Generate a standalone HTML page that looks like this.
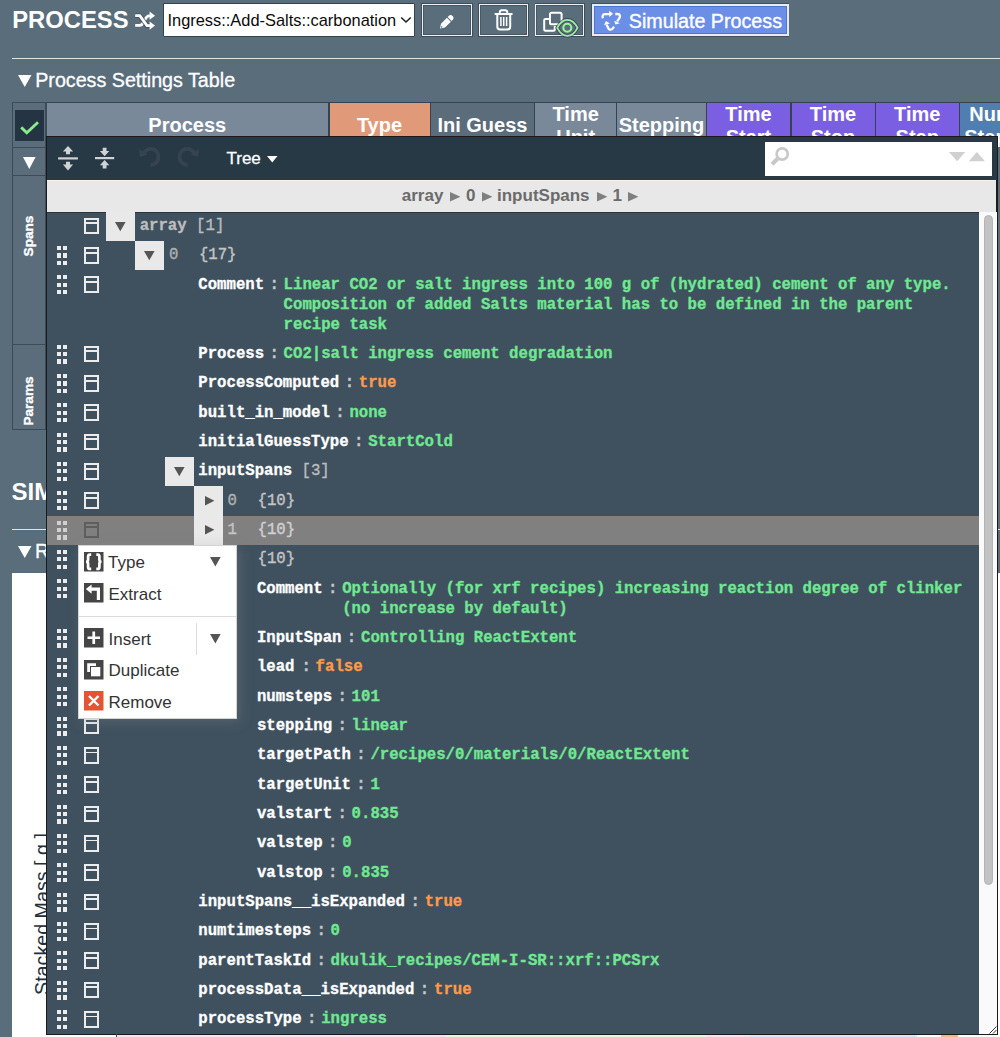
<!DOCTYPE html><html><head><meta charset='utf-8'><style>
html,body{margin:0;padding:0;}
body{width:1000px;height:1037px;position:relative;overflow:hidden;background:#5a6d7b;font-family:"Liberation Sans",sans-serif;}
.a{position:absolute;}
.t{white-space:pre;}
svg{position:absolute;overflow:visible;}
</style></head><body>
<div class='a' style='left:12.00px;top:573.00px;width:988.00px;height:464.00px;background:#ffffff;'></div>
<div class='a t' style='left:12.20px;top:8.35px;font-family:"Liberation Sans", sans-serif;font-size:23.8px;line-height:23.8px;font-weight:700;color:#fff;'>PROCESS</div>
<svg style='left:0;top:0' width='200' height='40'>
<g fill='none' stroke-linecap='butt'>
<path d='M135.2 25.4 H139.6 C141.6 25.4 142.4 24.3 143.3 22.6 L145 19.6 C146 17.6 147 15.8 149 15.8 H151' stroke='#fff' stroke-width='2.8'/>
<path d='M135.2 15.7 H139.8 L147 25.6 H151' stroke='#3c4c58' stroke-width='4.6' stroke-opacity='0.8'/>
<path d='M135.2 15.7 H139.8 L147 25.6 H151' stroke='#fff' stroke-width='2.8'/>
</g>
<path d='M149.6 11.6 L155 15.7 L149.6 19.8 Z' fill='#fff'/>
<path d='M149.6 21.5 L155 25.6 L149.6 29.7 Z' fill='#fff'/>
</svg>
<div class='a' style='left:162.60px;top:3.20px;width:252.80px;height:33.40px;background:#fff;border-radius:1px;box-sizing:border-box;border:1px solid #33424d;'></div>
<div class='a t' style='left:167.50px;top:11.62px;font-family:"Liberation Sans", sans-serif;font-size:16.4px;line-height:16.4px;font-weight:400;color:#0a0a0a;'>Ingress::Add-Salts::carbonation</div>
<svg style='left:400px;top:16px' width='12' height='8' viewBox='0 0 12 8'><path d='M1.2 1.5 L6 6 L10.8 1.5' fill='none' stroke='#222' stroke-width='1.6'/></svg>
<div class='a' style='left:421.40px;top:3.10px;width:51.50px;height:33.50px;box-sizing:border-box;border:0.8px solid rgba(40,55,66,0.55);'></div>
<div class='a' style='left:422.00px;top:3.80px;width:50.30px;height:32.10px;box-sizing:border-box;border:1.7px solid #f0f0f0;box-shadow:inset 0 0 0 1px rgba(38,52,63,0.35);'></div>
<div class='a' style='left:478.20px;top:3.10px;width:50.40px;height:33.50px;box-sizing:border-box;border:0.8px solid rgba(40,55,66,0.55);'></div>
<div class='a' style='left:478.80px;top:3.80px;width:49.20px;height:32.10px;box-sizing:border-box;border:1.7px solid #f0f0f0;box-shadow:inset 0 0 0 1px rgba(38,52,63,0.35);'></div>
<div class='a' style='left:534.70px;top:3.10px;width:50.20px;height:33.50px;box-sizing:border-box;border:0.8px solid rgba(40,55,66,0.55);'></div>
<div class='a' style='left:535.30px;top:3.80px;width:49.00px;height:32.10px;box-sizing:border-box;border:1.7px solid #f0f0f0;box-shadow:inset 0 0 0 1px rgba(38,52,63,0.35);'></div>
<svg style='left:0;top:0' width='600' height='40'>
<g transform='translate(440,28.6) rotate(-45)' fill='#fff'>
<path d='M0 0 L4.2 -2.8 H12.6 V2.8 H4.2 Z'/>
<path d='M13.6 -2.8 H15 A2.8 2.8 0 0 1 15 2.8 H13.6 Z'/>
<circle cx='2.3' cy='0' r='0.8' fill='#5a6d7b'/>
</g>
</svg>
<svg style='left:0;top:0' width='600' height='40'>
<g fill='none' stroke='#fff'>
<path d='M495.5 14 H511.7' stroke-width='2.2' stroke-linecap='round'/>
<path d='M499.8 13.5 V12.3 C499.8 11 500.6 10.2 501.8 10.2 H505.3 C506.5 10.2 507.3 11 507.3 12.3 V13.5' stroke-width='1.9'/>
<path d='M497.3 15 V26.8 C497.3 28.6 498.5 29.6 500.2 29.6 H507.2 C508.9 29.6 510.2 28.6 510.2 26.8 V15' stroke-width='2'/>
<path d='M500.9 17 V26 M503.7 17 V26 M506.6 17 V26' stroke-width='1.5'/>
</g></svg>
<svg style='left:0;top:0' width='600' height='40'>
<g fill='none' stroke='#fff' stroke-width='2'>
<rect x='550' y='12.7' width='11.6' height='11.6' rx='1.6'/>
<path d='M549 19 H545.5 C544.7 19 544.2 19.5 544.2 20.3 V29.6 C544.2 30.4 544.7 30.8 545.5 30.8 H553.5 C554.3 30.8 554.8 30.4 554.8 29.6 V26'/>
</g>
<path d='M557.2 27.8 C560.5 21.5 564 19.8 567.4 19.8 C570.8 19.8 574.3 21.5 577.6 27.8 C574.3 34 570.8 35.8 567.4 35.8 C564 35.8 560.5 34 557.2 27.8 Z' fill='#5a6d7b' stroke='rgba(50,40,90,0.6)' stroke-width='3.6'/>
<path d='M557.2 27.8 C560.5 21.5 564 19.8 567.4 19.8 C570.8 19.8 574.3 21.5 577.6 27.8 C574.3 34 570.8 35.8 567.4 35.8 C564 35.8 560.5 34 557.2 27.8 Z' fill='none' stroke='#9af29a' stroke-width='1.8'/>
<circle cx='567.3' cy='27.7' r='4' fill='none' stroke='#9af29a' stroke-width='2.1'/>
</svg>
<div class='a' style='left:591.30px;top:3.10px;width:198.10px;height:33.50px;box-sizing:border-box;border:0.8px solid rgba(40,55,66,0.5);'></div>
<div class='a' style='left:591.90px;top:3.70px;width:196.90px;height:32.30px;background:#6b8fe7;box-sizing:border-box;border:2px solid #e8ebf2;box-shadow:inset 0 0 0 1px rgba(60,100,200,0.6);'></div>
<svg style='left:0;top:0' width='700' height='40'>
<g fill='none' stroke='#fff' stroke-width='2.3' stroke-linejoin='round'>
<path d='M603 18.3 C602 16.5 602.6 14.2 604.8 14.2 H609.5'/>
<path d='M615.3 14 H617.8 C619.8 14 620.6 16 619.5 17.8 L617.2 21.5'/>
<path d='M614 26.6 L612.6 28.6 C611.5 30 609.5 30 608.5 28.6 L606.6 24.8'/>
</g>
<path d='M609.2 10.8 L613 13.8 L609.2 16.9 Z' fill='#fff'/>
<path d='M614.3 20.8 L619.9 23.3 L615.3 24.6 Z' fill='#fff'/>
<path d='M604 25.2 L605.9 20.9 L609.9 23.5 Z' fill='#fff'/>
</svg>
<div class='a t' style='left:628.80px;top:12.02px;font-family:"Liberation Sans", sans-serif;font-size:19.7px;line-height:19.7px;font-weight:400;color:#fff;-webkit-text-stroke:0.35px #fff;'>Simulate Process</div>
<div class='a' style='left:12.00px;top:57.80px;width:988.00px;height:1.40px;background:#e6e3df;'></div>
<svg style='left:18px;top:74.5px' width='14' height='12' viewBox='0 0 14 12'><path d='M0 0 H13.5 L6.75 12 Z' fill='#fff'/></svg>
<div class='a t' style='left:35.20px;top:70.92px;font-family:"Liberation Sans", sans-serif;font-size:19.7px;line-height:19.7px;font-weight:400;color:#fff;-webkit-text-stroke:0.3px #fff;'>Process Settings Table</div>
<div class='a' style='left:12.00px;top:102.20px;width:988.00px;height:45.00px;background:#34434f;'></div>
<div class='a' style='left:12.00px;top:102.20px;width:34.50px;height:328.30px;background:#3c4b57;'></div>
<div class='a' style='left:12.80px;top:103.00px;width:32.70px;height:43.60px;background:#5b6d7b;'></div>
<div class='a' style='left:15.00px;top:110.00px;width:29.00px;height:31.00px;background:#243442;'></div>
<svg style='left:20px;top:118px' width='19' height='15' viewBox='0 0 19 15'><path d='M1.2 9.4 L6.8 14.8 L18 4.2' fill='none' stroke='#8ae98a' stroke-width='2.9'/></svg>
<div class='a' style='left:12.80px;top:147.80px;width:32.70px;height:26.80px;background:#5b6d7b;'></div>
<svg style='left:23px;top:157px' width='13' height='12' viewBox='0 0 13 12'><path d='M0 0 H12.6 L6.3 12 Z' fill='#fff'/></svg>
<div class='a' style='left:12.80px;top:175.80px;width:32.70px;height:167.80px;background:#5b6d7b;'></div>
<div class='a' style='left:12.80px;top:344.80px;width:32.70px;height:84.70px;background:#5b6d7b;'></div>
<div class='a t' style='left:29px;top:236px;transform:translate(-50%,-50%) rotate(-90deg);font-family:"Liberation Sans", sans-serif;font-size:13.6px;line-height:14px;font-weight:700;color:#fff;-webkit-text-stroke:0.35px #fff'>Spans</div>
<div class='a t' style='left:29px;top:400.5px;transform:translate(-50%,-50%) rotate(-90deg);font-family:"Liberation Sans", sans-serif;font-size:13.6px;line-height:14px;font-weight:700;color:#fff;-webkit-text-stroke:0.35px #fff'>Params</div>
<div class='a' style='left:46.50px;top:102.80px;width:281.50px;height:43.80px;background:#7a899a;'></div>
<div class='a t' style='left:46.5px;width:281.5px;text-align:center;top:115.06px;font-family:"Liberation Sans", sans-serif;font-size:20px;line-height:20px;font-weight:700;color:#fff'>Process</div>
<div class='a' style='left:329.50px;top:102.80px;width:100.00px;height:43.80px;background:#e19a79;'></div>
<div class='a t' style='left:329.5px;width:100.0px;text-align:center;top:115.06px;font-family:"Liberation Sans", sans-serif;font-size:20px;line-height:20px;font-weight:700;color:#fff'>Type</div>
<div class='a' style='left:431.00px;top:102.80px;width:102.90px;height:43.80px;background:#5b6c7a;'></div>
<div class='a t' style='left:431px;width:102.89999999999998px;text-align:center;top:115.06px;font-family:"Liberation Sans", sans-serif;font-size:20px;line-height:20px;font-weight:700;color:#fff'>Ini Guess</div>
<div class='a' style='left:535.30px;top:102.80px;width:80.70px;height:43.80px;background:#7a899a;'></div>
<div class='a' style='left:535.3px;width:80.70000000000005px;height:43.8px;top:102.8px;overflow:hidden'><div class='a t' style='left:0;width:80.70000000000005px;text-align:center;top:0.46px;font-family:"Liberation Sans", sans-serif;font-size:20px;line-height:22.6px;font-weight:700;color:#fff'>Time<br>Unit</div></div>
<div class='a' style='left:617.30px;top:102.80px;width:88.30px;height:43.80px;background:#7a899a;'></div>
<div class='a t' style='left:617.3px;width:88.30000000000007px;text-align:center;top:115.06px;font-family:"Liberation Sans", sans-serif;font-size:20px;line-height:20px;font-weight:700;color:#fff'>Stepping</div>
<div class='a' style='left:707.00px;top:102.80px;width:83.00px;height:43.80px;background:#7a5fe3;'></div>
<div class='a' style='left:707px;width:83px;height:43.8px;top:102.8px;overflow:hidden'><div class='a t' style='left:0;width:83px;text-align:center;top:0.46px;font-family:"Liberation Sans", sans-serif;font-size:20px;line-height:22.6px;font-weight:700;color:#fff'>Time<br>Start</div></div>
<div class='a' style='left:791.50px;top:102.80px;width:83.00px;height:43.80px;background:#7a5fe3;'></div>
<div class='a' style='left:791.5px;width:83.0px;height:43.8px;top:102.8px;overflow:hidden'><div class='a t' style='left:0;width:83.0px;text-align:center;top:0.46px;font-family:"Liberation Sans", sans-serif;font-size:20px;line-height:22.6px;font-weight:700;color:#fff'>Time<br>Stop</div></div>
<div class='a' style='left:876.00px;top:102.80px;width:82.50px;height:43.80px;background:#7a5fe3;'></div>
<div class='a' style='left:876px;width:82.5px;height:43.8px;top:102.8px;overflow:hidden'><div class='a t' style='left:0;width:82.5px;text-align:center;top:0.46px;font-family:"Liberation Sans", sans-serif;font-size:20px;line-height:22.6px;font-weight:700;color:#fff'>Time<br>Step</div></div>
<div class='a' style='left:960.00px;top:102.80px;width:63.00px;height:43.80px;background:#517eb0;'></div>
<div class='a' style='left:960px;width:63px;height:43.8px;top:102.8px;overflow:hidden'><div class='a t' style='left:0;width:63px;text-align:center;top:0.46px;font-family:"Liberation Sans", sans-serif;font-size:20px;line-height:22.6px;font-weight:700;color:#fff'>Num<br>Steps</div></div>
<div class='a t' style='left:11.50px;top:480.28px;font-family:"Liberation Sans", sans-serif;font-size:24px;line-height:24px;font-weight:700;color:#fff;'>SIMULATION</div>
<div class='a' style='left:12.00px;top:528.80px;width:988.00px;height:1.40px;background:#e6e3df;'></div>
<svg style='left:18px;top:546px' width='14' height='12' viewBox='0 0 14 12'><path d='M0 0 H13.5 L6.75 12 Z' fill='#fff'/></svg>
<div class='a t' style='left:35.00px;top:541.74px;font-family:"Liberation Sans", sans-serif;font-size:19.8px;line-height:19.8px;font-weight:400;color:#fff;-webkit-text-stroke:0.3px #fff;'>Results</div>
<div class='a t' style='left:34px;top:914px;transform:translate(0,-50%) rotate(-90deg);transform-origin:0 50%;font-family:"Liberation Sans", sans-serif;font-size:19.7px;line-height:20px;color:#253746'></div>
<div class='a t' style='left:42px;top:915px;width:0;height:0'><div class='a t' style='left:-80px;top:-10px;width:160px;text-align:center;transform:rotate(-90deg);font-family:"Liberation Sans", sans-serif;font-size:19.7px;line-height:20px;color:#1f2f3c'>Stacked Mass [ g ]</div></div>
<div class='a' style='left:46.00px;top:136.20px;width:952.00px;height:898.80px;background:#1b1b1b;'></div>
<div class='a' style='left:47.00px;top:137.20px;width:950.00px;height:42.60px;background:#263945;'></div>
<svg style='left:58px;top:146px' width='21' height='25' viewBox='0 0 21 25'>
<path d='M10 0 L15.1 5.6 H12 V8.3 H8 V5.6 H4.9 Z' fill='#d0d3d6'/>
<rect x='0.1' y='11.3' width='19.8' height='2.2' fill='#d0d3d6'/>
<path d='M10 24.5 L15.1 18.6 H12 V15.8 H8 V18.6 H4.9 Z' fill='#d0d3d6'/>
</svg>
<svg style='left:95px;top:147px' width='21' height='22' viewBox='0 0 21 22'>
<path d='M9.6 9.2 L14.3 4 H11.5 V0.8 H7.7 V4 H4.9 Z' fill='#d0d3d6'/>
<rect x='0' y='10' width='19.2' height='2.2' fill='#d0d3d6'/>
<path d='M9.6 13 L14.3 18.2 H11.5 V21.5 H7.7 V18.2 H4.9 Z' fill='#d0d3d6'/>
</svg>
<svg style='left:138px;top:146px' width='24' height='22' viewBox='0 0 24 22'>
<path d='M6 7 C8 3.5 11 2.5 14 3 C18 3.5 20.5 7 20.5 11 C20.5 15.5 17 19 12.5 19' fill='none' stroke='#354450' stroke-width='3.8'/>
<path d='M1 3 L2 11 L9.5 8.5 Z' fill='#354450'/>
</svg>
<svg style='left:176px;top:146px' width='24' height='22' viewBox='0 0 24 22'>
<path d='M18 7 C16 3.5 13 2.5 10 3 C6 3.5 3.5 7 3.5 11 C3.5 15.5 7 19 11.5 19' fill='none' stroke='#354450' stroke-width='3.8'/>
<path d='M23 3 L22 11 L14.5 8.5 Z' fill='#354450'/>
</svg>
<div class='a t' style='left:226.50px;top:149.51px;font-family:"Liberation Sans", sans-serif;font-size:17px;line-height:17px;font-weight:400;color:#fff;-webkit-text-stroke:0.3px #fff;'>Tree</div>
<svg style='left:267px;top:156px' width='11' height='7' viewBox='0 0 11 7'><path d='M0 0 H10.5 L5.25 6.5 Z' fill='#fff'/></svg>
<div class='a' style='left:764.70px;top:141.70px;width:227.50px;height:34.60px;background:#fff;'></div>
<svg style='left:770px;top:147px' width='20' height='19' viewBox='0 0 20 19'>
<circle cx='12.2' cy='7' r='5.6' fill='none' stroke='#c8c8c8' stroke-width='2.6'/>
<path d='M8.3 11 L2 17.2' stroke='#c8c8c8' stroke-width='4'/>
</svg>
<svg style='left:948.5px;top:152px' width='37' height='10' viewBox='0 0 37 10'>
<path d='M0 0 H16.2 L8.1 9.3 Z' fill='#d0d0d0'/><path d='M19.8 9.3 H36 L27.9 0 Z' fill='#d0d0d0'/></svg>
<div class='a' style='left:47.00px;top:179.80px;width:949.00px;height:31.80px;background:#e8e8e8;'></div>
<div class='a' style='left:47.00px;top:179.80px;width:949.00px;height:1.00px;background:#f2f2f2;'></div>
<div class='a t' style='left:401.80px;top:187.01px;font-family:"Liberation Sans", sans-serif;font-size:17px;line-height:17px;font-weight:700;color:#6b6b6b;'>array</div>
<div class='a t' style='left:466.00px;top:187.01px;font-family:"Liberation Sans", sans-serif;font-size:17px;line-height:17px;font-weight:700;color:#6b6b6b;'>0</div>
<div class='a t' style='left:497.00px;top:187.01px;font-family:"Liberation Sans", sans-serif;font-size:17px;line-height:17px;font-weight:700;color:#6b6b6b;'>inputSpans</div>
<div class='a t' style='left:612.50px;top:187.01px;font-family:"Liberation Sans", sans-serif;font-size:17px;line-height:17px;font-weight:700;color:#6b6b6b;'>1</div>
<svg style='left:450.3px;top:191.5px' width='11' height='10' viewBox='0 0 11 10'><path d='M0 0 V9.4 L10.4 4.7 Z' fill='#7f7f7f'/></svg>
<svg style='left:482.3px;top:191.5px' width='11' height='10' viewBox='0 0 11 10'><path d='M0 0 V9.4 L10.4 4.7 Z' fill='#7f7f7f'/></svg>
<svg style='left:596.7px;top:191.5px' width='11' height='10' viewBox='0 0 11 10'><path d='M0 0 V9.4 L10.4 4.7 Z' fill='#7f7f7f'/></svg>
<svg style='left:628.2px;top:191.5px' width='11' height='10' viewBox='0 0 11 10'><path d='M0 0 V9.4 L10.4 4.7 Z' fill='#7f7f7f'/></svg>
<div class='a' style='left:47.00px;top:211.60px;width:932.00px;height:822.60px;background:#3f515f;'></div>
<div class='a' style='left:47.00px;top:211.60px;width:932.00px;height:1.00px;background:#26343f;'></div>
<div class='a' style='left:979.00px;top:211.60px;width:18.00px;height:822.60px;background:#fafafa;'></div>
<div class='a' style='left:984.00px;top:215.40px;width:9.00px;height:669.30px;background:#c2c2c2;border-radius:4.5px;box-sizing:border-box;border:0.6px solid #b4b4b4;'></div>
<div class='a' style='left:84.00px;top:217.70px;width:14.50px;height:16.80px;box-sizing:border-box;border:2.3px solid #ececec;'></div>
<div class='a' style='left:86.00px;top:222.40px;width:10.50px;height:1.80px;background:#ececec;'></div>
<div class='a' style='left:106.00px;top:211.40px;width:29.20px;height:29.33px;background:#e9e9e9;'></div>
<svg style='left:114.90px;top:222.00px' width='11' height='10' viewBox='0 0 11 10'><path d='M0 0 H10.6 L5.3 9.3 Z' fill='#555'/></svg>
<div class='a t' style='left:139.70px;top:219.10px;font-family:"Liberation Mono", monospace;font-size:15.67px;line-height:15.67px;font-weight:700;color:#bdbdbd;transform:scaleY(1.08);transform-origin:0 12.00px;-webkit-text-stroke:0.3px #bdbdbd;'>array</div>
<div class='a t' style='left:196.11px;top:219.10px;font-family:"Liberation Mono", monospace;font-size:15.67px;line-height:15.67px;font-weight:400;color:#bdbdbd;transform:scaleY(1.08);transform-origin:0 12.00px;-webkit-text-stroke:0.35px #bdbdbd;'>[1]</div>
<div class='a' style='left:56.70px;top:245.93px;width:4.20px;height:4.20px;background:#ececec;'></div>
<div class='a' style='left:56.70px;top:253.33px;width:4.20px;height:4.20px;background:#ececec;'></div>
<div class='a' style='left:56.70px;top:260.73px;width:4.20px;height:4.20px;background:#ececec;'></div>
<div class='a' style='left:62.70px;top:245.93px;width:4.20px;height:4.20px;background:#ececec;'></div>
<div class='a' style='left:62.70px;top:253.33px;width:4.20px;height:4.20px;background:#ececec;'></div>
<div class='a' style='left:62.70px;top:260.73px;width:4.20px;height:4.20px;background:#ececec;'></div>
<div class='a' style='left:84.00px;top:247.03px;width:14.50px;height:16.80px;box-sizing:border-box;border:2.3px solid #ececec;'></div>
<div class='a' style='left:86.00px;top:251.73px;width:10.50px;height:1.80px;background:#ececec;'></div>
<div class='a' style='left:135.30px;top:240.73px;width:29.20px;height:29.33px;background:#e9e9e9;'></div>
<svg style='left:144.20px;top:251.33px' width='11' height='10' viewBox='0 0 11 10'><path d='M0 0 H10.6 L5.3 9.3 Z' fill='#555'/></svg>
<div class='a t' style='left:169.00px;top:248.43px;font-family:"Liberation Mono", monospace;font-size:15.67px;line-height:15.67px;font-weight:400;color:#b0b0b0;transform:scaleY(1.08);transform-origin:0 12.00px;-webkit-text-stroke:0.35px #b0b0b0;'>0</div>
<div class='a t' style='left:198.90px;top:248.43px;font-family:"Liberation Mono", monospace;font-size:15.67px;line-height:15.67px;font-weight:400;color:#c4c4c4;transform:scaleY(1.08);transform-origin:0 12.00px;-webkit-text-stroke:0.35px #c4c4c4;'>{17}</div>
<div class='a' style='left:56.70px;top:275.26px;width:4.20px;height:4.20px;background:#ececec;'></div>
<div class='a' style='left:56.70px;top:282.66px;width:4.20px;height:4.20px;background:#ececec;'></div>
<div class='a' style='left:56.70px;top:290.06px;width:4.20px;height:4.20px;background:#ececec;'></div>
<div class='a' style='left:62.70px;top:275.26px;width:4.20px;height:4.20px;background:#ececec;'></div>
<div class='a' style='left:62.70px;top:282.66px;width:4.20px;height:4.20px;background:#ececec;'></div>
<div class='a' style='left:62.70px;top:290.06px;width:4.20px;height:4.20px;background:#ececec;'></div>
<div class='a' style='left:84.00px;top:276.36px;width:14.50px;height:16.80px;box-sizing:border-box;border:2.3px solid #ececec;'></div>
<div class='a' style='left:86.00px;top:281.06px;width:10.50px;height:1.80px;background:#ececec;'></div>
<div class='a t' style='left:269.41px;top:277.76px;font-family:"Liberation Mono", monospace;font-size:15.67px;line-height:15.67px;font-weight:700;color:#c8c8c8;transform:scaleY(1.08);transform-origin:0 12.00px;-webkit-text-stroke:0.3px #c8c8c8;'>:</div>
<div class='a t' style='left:198.30px;top:277.76px;font-family:"Liberation Mono", monospace;font-size:15.67px;line-height:15.67px;font-weight:700;color:#ffffff;transform:scaleY(1.08);transform-origin:0 12.00px;-webkit-text-stroke:0.3px #ffffff;'>Comment</div>
<div class='a t' style='left:283.61px;top:277.76px;font-family:"Liberation Mono", monospace;font-size:15.67px;line-height:15.67px;font-weight:700;color:#70e891;transform:scaleY(1.08);transform-origin:0 12.00px;-webkit-text-stroke:0.3px #70e891;'>Linear CO2 or salt ingress into 100 g of (hydrated) cement of any type.</div>
<div class='a t' style='left:283.61px;top:297.76px;font-family:"Liberation Mono", monospace;font-size:15.67px;line-height:15.67px;font-weight:700;color:#70e891;transform:scaleY(1.08);transform-origin:0 12.00px;-webkit-text-stroke:0.3px #70e891;'>Composition of added Salts material has to be defined in the parent</div>
<div class='a t' style='left:283.61px;top:317.76px;font-family:"Liberation Mono", monospace;font-size:15.67px;line-height:15.67px;font-weight:700;color:#70e891;transform:scaleY(1.08);transform-origin:0 12.00px;-webkit-text-stroke:0.3px #70e891;'>recipe task</div>
<div class='a' style='left:56.70px;top:344.59px;width:4.20px;height:4.20px;background:#ececec;'></div>
<div class='a' style='left:56.70px;top:351.99px;width:4.20px;height:4.20px;background:#ececec;'></div>
<div class='a' style='left:56.70px;top:359.39px;width:4.20px;height:4.20px;background:#ececec;'></div>
<div class='a' style='left:62.70px;top:344.59px;width:4.20px;height:4.20px;background:#ececec;'></div>
<div class='a' style='left:62.70px;top:351.99px;width:4.20px;height:4.20px;background:#ececec;'></div>
<div class='a' style='left:62.70px;top:359.39px;width:4.20px;height:4.20px;background:#ececec;'></div>
<div class='a' style='left:84.00px;top:345.69px;width:14.50px;height:16.80px;box-sizing:border-box;border:2.3px solid #ececec;'></div>
<div class='a' style='left:86.00px;top:350.39px;width:10.50px;height:1.80px;background:#ececec;'></div>
<div class='a t' style='left:269.41px;top:347.09px;font-family:"Liberation Mono", monospace;font-size:15.67px;line-height:15.67px;font-weight:700;color:#c8c8c8;transform:scaleY(1.08);transform-origin:0 12.00px;-webkit-text-stroke:0.3px #c8c8c8;'>:</div>
<div class='a t' style='left:198.30px;top:347.09px;font-family:"Liberation Mono", monospace;font-size:15.67px;line-height:15.67px;font-weight:700;color:#ffffff;transform:scaleY(1.08);transform-origin:0 12.00px;-webkit-text-stroke:0.3px #ffffff;'>Process</div>
<div class='a t' style='left:283.61px;top:347.09px;font-family:"Liberation Mono", monospace;font-size:15.67px;line-height:15.67px;font-weight:700;color:#70e891;transform:scaleY(1.08);transform-origin:0 12.00px;-webkit-text-stroke:0.3px #70e891;'>CO2|salt ingress cement degradation</div>
<div class='a' style='left:56.70px;top:373.92px;width:4.20px;height:4.20px;background:#ececec;'></div>
<div class='a' style='left:56.70px;top:381.32px;width:4.20px;height:4.20px;background:#ececec;'></div>
<div class='a' style='left:56.70px;top:388.72px;width:4.20px;height:4.20px;background:#ececec;'></div>
<div class='a' style='left:62.70px;top:373.92px;width:4.20px;height:4.20px;background:#ececec;'></div>
<div class='a' style='left:62.70px;top:381.32px;width:4.20px;height:4.20px;background:#ececec;'></div>
<div class='a' style='left:62.70px;top:388.72px;width:4.20px;height:4.20px;background:#ececec;'></div>
<div class='a' style='left:84.00px;top:375.02px;width:14.50px;height:16.80px;box-sizing:border-box;border:2.3px solid #ececec;'></div>
<div class='a' style='left:86.00px;top:379.72px;width:10.50px;height:1.80px;background:#ececec;'></div>
<div class='a t' style='left:344.63px;top:376.42px;font-family:"Liberation Mono", monospace;font-size:15.67px;line-height:15.67px;font-weight:700;color:#c8c8c8;transform:scaleY(1.08);transform-origin:0 12.00px;-webkit-text-stroke:0.3px #c8c8c8;'>:</div>
<div class='a t' style='left:198.30px;top:376.42px;font-family:"Liberation Mono", monospace;font-size:15.67px;line-height:15.67px;font-weight:700;color:#ffffff;transform:scaleY(1.08);transform-origin:0 12.00px;-webkit-text-stroke:0.3px #ffffff;'>ProcessComputed</div>
<div class='a t' style='left:358.83px;top:376.42px;font-family:"Liberation Mono", monospace;font-size:15.67px;line-height:15.67px;font-weight:700;color:#ff9a48;transform:scaleY(1.08);transform-origin:0 12.00px;-webkit-text-stroke:0.3px #ff9a48;'>true</div>
<div class='a' style='left:56.70px;top:403.25px;width:4.20px;height:4.20px;background:#ececec;'></div>
<div class='a' style='left:56.70px;top:410.65px;width:4.20px;height:4.20px;background:#ececec;'></div>
<div class='a' style='left:56.70px;top:418.05px;width:4.20px;height:4.20px;background:#ececec;'></div>
<div class='a' style='left:62.70px;top:403.25px;width:4.20px;height:4.20px;background:#ececec;'></div>
<div class='a' style='left:62.70px;top:410.65px;width:4.20px;height:4.20px;background:#ececec;'></div>
<div class='a' style='left:62.70px;top:418.05px;width:4.20px;height:4.20px;background:#ececec;'></div>
<div class='a' style='left:84.00px;top:404.35px;width:14.50px;height:16.80px;box-sizing:border-box;border:2.3px solid #ececec;'></div>
<div class='a' style='left:86.00px;top:409.05px;width:10.50px;height:1.80px;background:#ececec;'></div>
<div class='a t' style='left:335.23px;top:405.75px;font-family:"Liberation Mono", monospace;font-size:15.67px;line-height:15.67px;font-weight:700;color:#c8c8c8;transform:scaleY(1.08);transform-origin:0 12.00px;-webkit-text-stroke:0.3px #c8c8c8;'>:</div>
<div class='a t' style='left:198.30px;top:405.75px;font-family:"Liberation Mono", monospace;font-size:15.67px;line-height:15.67px;font-weight:700;color:#ffffff;transform:scaleY(1.08);transform-origin:0 12.00px;-webkit-text-stroke:0.3px #ffffff;'>built_in_model</div>
<div class='a t' style='left:349.43px;top:405.75px;font-family:"Liberation Mono", monospace;font-size:15.67px;line-height:15.67px;font-weight:700;color:#70e891;transform:scaleY(1.08);transform-origin:0 12.00px;-webkit-text-stroke:0.3px #70e891;'>none</div>
<div class='a' style='left:56.70px;top:432.58px;width:4.20px;height:4.20px;background:#ececec;'></div>
<div class='a' style='left:56.70px;top:439.98px;width:4.20px;height:4.20px;background:#ececec;'></div>
<div class='a' style='left:56.70px;top:447.38px;width:4.20px;height:4.20px;background:#ececec;'></div>
<div class='a' style='left:62.70px;top:432.58px;width:4.20px;height:4.20px;background:#ececec;'></div>
<div class='a' style='left:62.70px;top:439.98px;width:4.20px;height:4.20px;background:#ececec;'></div>
<div class='a' style='left:62.70px;top:447.38px;width:4.20px;height:4.20px;background:#ececec;'></div>
<div class='a' style='left:84.00px;top:433.68px;width:14.50px;height:16.80px;box-sizing:border-box;border:2.3px solid #ececec;'></div>
<div class='a' style='left:86.00px;top:438.38px;width:10.50px;height:1.80px;background:#ececec;'></div>
<div class='a t' style='left:354.03px;top:435.08px;font-family:"Liberation Mono", monospace;font-size:15.67px;line-height:15.67px;font-weight:700;color:#c8c8c8;transform:scaleY(1.08);transform-origin:0 12.00px;-webkit-text-stroke:0.3px #c8c8c8;'>:</div>
<div class='a t' style='left:198.30px;top:435.08px;font-family:"Liberation Mono", monospace;font-size:15.67px;line-height:15.67px;font-weight:700;color:#ffffff;transform:scaleY(1.08);transform-origin:0 12.00px;-webkit-text-stroke:0.3px #ffffff;'>initialGuessType</div>
<div class='a t' style='left:368.23px;top:435.08px;font-family:"Liberation Mono", monospace;font-size:15.67px;line-height:15.67px;font-weight:700;color:#70e891;transform:scaleY(1.08);transform-origin:0 12.00px;-webkit-text-stroke:0.3px #70e891;'>StartCold</div>
<div class='a' style='left:56.70px;top:461.91px;width:4.20px;height:4.20px;background:#ececec;'></div>
<div class='a' style='left:56.70px;top:469.31px;width:4.20px;height:4.20px;background:#ececec;'></div>
<div class='a' style='left:56.70px;top:476.71px;width:4.20px;height:4.20px;background:#ececec;'></div>
<div class='a' style='left:62.70px;top:461.91px;width:4.20px;height:4.20px;background:#ececec;'></div>
<div class='a' style='left:62.70px;top:469.31px;width:4.20px;height:4.20px;background:#ececec;'></div>
<div class='a' style='left:62.70px;top:476.71px;width:4.20px;height:4.20px;background:#ececec;'></div>
<div class='a' style='left:84.00px;top:463.01px;width:14.50px;height:16.80px;box-sizing:border-box;border:2.3px solid #ececec;'></div>
<div class='a' style='left:86.00px;top:467.71px;width:10.50px;height:1.80px;background:#ececec;'></div>
<div class='a' style='left:164.60px;top:456.71px;width:29.20px;height:29.33px;background:#e9e9e9;'></div>
<svg style='left:173.50px;top:467.31px' width='11' height='10' viewBox='0 0 11 10'><path d='M0 0 H10.6 L5.3 9.3 Z' fill='#555'/></svg>
<div class='a t' style='left:198.30px;top:464.41px;font-family:"Liberation Mono", monospace;font-size:15.67px;line-height:15.67px;font-weight:700;color:#ffffff;transform:scaleY(1.08);transform-origin:0 12.00px;-webkit-text-stroke:0.3px #ffffff;'>inputSpans</div>
<div class='a t' style='left:301.52px;top:464.41px;font-family:"Liberation Mono", monospace;font-size:15.67px;line-height:15.67px;font-weight:400;color:#bdbdbd;transform:scaleY(1.08);transform-origin:0 12.00px;-webkit-text-stroke:0.35px #bdbdbd;'>[3]</div>
<div class='a' style='left:56.70px;top:491.24px;width:4.20px;height:4.20px;background:#ececec;'></div>
<div class='a' style='left:56.70px;top:498.64px;width:4.20px;height:4.20px;background:#ececec;'></div>
<div class='a' style='left:56.70px;top:506.04px;width:4.20px;height:4.20px;background:#ececec;'></div>
<div class='a' style='left:62.70px;top:491.24px;width:4.20px;height:4.20px;background:#ececec;'></div>
<div class='a' style='left:62.70px;top:498.64px;width:4.20px;height:4.20px;background:#ececec;'></div>
<div class='a' style='left:62.70px;top:506.04px;width:4.20px;height:4.20px;background:#ececec;'></div>
<div class='a' style='left:84.00px;top:492.34px;width:14.50px;height:16.80px;box-sizing:border-box;border:2.3px solid #ececec;'></div>
<div class='a' style='left:86.00px;top:497.04px;width:10.50px;height:1.80px;background:#ececec;'></div>
<div class='a' style='left:193.90px;top:486.04px;width:29.20px;height:29.33px;background:#e9e9e9;'></div>
<svg style='left:204.80px;top:496.04px' width='10' height='10' viewBox='0 0 10 10'><path d='M0 0 V9.6 L9.4 4.8 Z' fill='#555'/></svg>
<div class='a t' style='left:227.60px;top:493.74px;font-family:"Liberation Mono", monospace;font-size:15.67px;line-height:15.67px;font-weight:400;color:#b0b0b0;transform:scaleY(1.08);transform-origin:0 12.00px;-webkit-text-stroke:0.35px #b0b0b0;'>0</div>
<div class='a t' style='left:257.50px;top:493.74px;font-family:"Liberation Mono", monospace;font-size:15.67px;line-height:15.67px;font-weight:400;color:#c4c4c4;transform:scaleY(1.08);transform-origin:0 12.00px;-webkit-text-stroke:0.35px #c4c4c4;'>{10}</div>
<div class='a' style='left:47.00px;top:516.47px;width:932.00px;height:28.33px;background:#808080;'></div>
<div class='a' style='left:56.70px;top:520.57px;width:4.20px;height:4.20px;background:#d0d0d0;'></div>
<div class='a' style='left:56.70px;top:527.97px;width:4.20px;height:4.20px;background:#d0d0d0;'></div>
<div class='a' style='left:56.70px;top:535.37px;width:4.20px;height:4.20px;background:#d0d0d0;'></div>
<div class='a' style='left:62.70px;top:520.57px;width:4.20px;height:4.20px;background:#d0d0d0;'></div>
<div class='a' style='left:62.70px;top:527.97px;width:4.20px;height:4.20px;background:#d0d0d0;'></div>
<div class='a' style='left:62.70px;top:535.37px;width:4.20px;height:4.20px;background:#d0d0d0;'></div>
<div class='a' style='left:84.00px;top:521.67px;width:14.50px;height:16.80px;box-sizing:border-box;border:2.3px solid #5e5e5e;'></div>
<div class='a' style='left:86.00px;top:526.37px;width:10.50px;height:1.80px;background:#5e5e5e;'></div>
<div class='a' style='left:193.90px;top:515.37px;width:29.20px;height:29.33px;background:#e9e9e9;'></div>
<svg style='left:204.80px;top:525.37px' width='10' height='10' viewBox='0 0 10 10'><path d='M0 0 V9.6 L9.4 4.8 Z' fill='#555'/></svg>
<div class='a t' style='left:227.60px;top:523.07px;font-family:"Liberation Mono", monospace;font-size:15.67px;line-height:15.67px;font-weight:400;color:#c4c4c4;transform:scaleY(1.08);transform-origin:0 12.00px;-webkit-text-stroke:0.35px #c4c4c4;'>1</div>
<div class='a t' style='left:257.50px;top:523.07px;font-family:"Liberation Mono", monospace;font-size:15.67px;line-height:15.67px;font-weight:400;color:#d0d0d0;transform:scaleY(1.08);transform-origin:0 12.00px;-webkit-text-stroke:0.35px #d0d0d0;'>{10}</div>
<div class='a' style='left:56.70px;top:549.90px;width:4.20px;height:4.20px;background:#ececec;'></div>
<div class='a' style='left:56.70px;top:557.30px;width:4.20px;height:4.20px;background:#ececec;'></div>
<div class='a' style='left:56.70px;top:564.70px;width:4.20px;height:4.20px;background:#ececec;'></div>
<div class='a' style='left:62.70px;top:549.90px;width:4.20px;height:4.20px;background:#ececec;'></div>
<div class='a' style='left:62.70px;top:557.30px;width:4.20px;height:4.20px;background:#ececec;'></div>
<div class='a' style='left:62.70px;top:564.70px;width:4.20px;height:4.20px;background:#ececec;'></div>
<div class='a' style='left:84.00px;top:551.00px;width:14.50px;height:16.80px;box-sizing:border-box;border:2.3px solid #ececec;'></div>
<div class='a' style='left:86.00px;top:555.70px;width:10.50px;height:1.80px;background:#ececec;'></div>
<div class='a' style='left:193.90px;top:544.70px;width:29.20px;height:29.33px;background:#e9e9e9;'></div>
<svg style='left:202.80px;top:555.30px' width='11' height='10' viewBox='0 0 11 10'><path d='M0 0 H10.6 L5.3 9.3 Z' fill='#555'/></svg>
<div class='a t' style='left:227.60px;top:552.40px;font-family:"Liberation Mono", monospace;font-size:15.67px;line-height:15.67px;font-weight:400;color:#b0b0b0;transform:scaleY(1.08);transform-origin:0 12.00px;-webkit-text-stroke:0.35px #b0b0b0;'>2</div>
<div class='a t' style='left:257.50px;top:552.40px;font-family:"Liberation Mono", monospace;font-size:15.67px;line-height:15.67px;font-weight:400;color:#c4c4c4;transform:scaleY(1.08);transform-origin:0 12.00px;-webkit-text-stroke:0.35px #c4c4c4;'>{10}</div>
<div class='a' style='left:56.70px;top:579.23px;width:4.20px;height:4.20px;background:#ececec;'></div>
<div class='a' style='left:56.70px;top:586.63px;width:4.20px;height:4.20px;background:#ececec;'></div>
<div class='a' style='left:56.70px;top:594.03px;width:4.20px;height:4.20px;background:#ececec;'></div>
<div class='a' style='left:62.70px;top:579.23px;width:4.20px;height:4.20px;background:#ececec;'></div>
<div class='a' style='left:62.70px;top:586.63px;width:4.20px;height:4.20px;background:#ececec;'></div>
<div class='a' style='left:62.70px;top:594.03px;width:4.20px;height:4.20px;background:#ececec;'></div>
<div class='a' style='left:84.00px;top:580.33px;width:14.50px;height:16.80px;box-sizing:border-box;border:2.3px solid #ececec;'></div>
<div class='a' style='left:86.00px;top:585.03px;width:10.50px;height:1.80px;background:#ececec;'></div>
<div class='a t' style='left:328.01px;top:581.73px;font-family:"Liberation Mono", monospace;font-size:15.67px;line-height:15.67px;font-weight:700;color:#c8c8c8;transform:scaleY(1.08);transform-origin:0 12.00px;-webkit-text-stroke:0.3px #c8c8c8;'>:</div>
<div class='a t' style='left:256.90px;top:581.73px;font-family:"Liberation Mono", monospace;font-size:15.67px;line-height:15.67px;font-weight:700;color:#ffffff;transform:scaleY(1.08);transform-origin:0 12.00px;-webkit-text-stroke:0.3px #ffffff;'>Comment</div>
<div class='a t' style='left:342.21px;top:581.73px;font-family:"Liberation Mono", monospace;font-size:15.67px;line-height:15.67px;font-weight:700;color:#70e891;transform:scaleY(1.08);transform-origin:0 12.00px;-webkit-text-stroke:0.3px #70e891;'>Optionally (for xrf recipes) increasing reaction degree of clinker</div>
<div class='a t' style='left:342.21px;top:601.73px;font-family:"Liberation Mono", monospace;font-size:15.67px;line-height:15.67px;font-weight:700;color:#70e891;transform:scaleY(1.08);transform-origin:0 12.00px;-webkit-text-stroke:0.3px #70e891;'>(no increase by default)</div>
<div class='a' style='left:56.70px;top:628.56px;width:4.20px;height:4.20px;background:#ececec;'></div>
<div class='a' style='left:56.70px;top:635.96px;width:4.20px;height:4.20px;background:#ececec;'></div>
<div class='a' style='left:56.70px;top:643.36px;width:4.20px;height:4.20px;background:#ececec;'></div>
<div class='a' style='left:62.70px;top:628.56px;width:4.20px;height:4.20px;background:#ececec;'></div>
<div class='a' style='left:62.70px;top:635.96px;width:4.20px;height:4.20px;background:#ececec;'></div>
<div class='a' style='left:62.70px;top:643.36px;width:4.20px;height:4.20px;background:#ececec;'></div>
<div class='a' style='left:84.00px;top:629.66px;width:14.50px;height:16.80px;box-sizing:border-box;border:2.3px solid #ececec;'></div>
<div class='a' style='left:86.00px;top:634.36px;width:10.50px;height:1.80px;background:#ececec;'></div>
<div class='a t' style='left:346.82px;top:631.06px;font-family:"Liberation Mono", monospace;font-size:15.67px;line-height:15.67px;font-weight:700;color:#c8c8c8;transform:scaleY(1.08);transform-origin:0 12.00px;-webkit-text-stroke:0.3px #c8c8c8;'>:</div>
<div class='a t' style='left:256.90px;top:631.06px;font-family:"Liberation Mono", monospace;font-size:15.67px;line-height:15.67px;font-weight:700;color:#ffffff;transform:scaleY(1.08);transform-origin:0 12.00px;-webkit-text-stroke:0.3px #ffffff;'>InputSpan</div>
<div class='a t' style='left:361.02px;top:631.06px;font-family:"Liberation Mono", monospace;font-size:15.67px;line-height:15.67px;font-weight:700;color:#70e891;transform:scaleY(1.08);transform-origin:0 12.00px;-webkit-text-stroke:0.3px #70e891;'>Controlling ReactExtent</div>
<div class='a' style='left:56.70px;top:657.89px;width:4.20px;height:4.20px;background:#ececec;'></div>
<div class='a' style='left:56.70px;top:665.29px;width:4.20px;height:4.20px;background:#ececec;'></div>
<div class='a' style='left:56.70px;top:672.69px;width:4.20px;height:4.20px;background:#ececec;'></div>
<div class='a' style='left:62.70px;top:657.89px;width:4.20px;height:4.20px;background:#ececec;'></div>
<div class='a' style='left:62.70px;top:665.29px;width:4.20px;height:4.20px;background:#ececec;'></div>
<div class='a' style='left:62.70px;top:672.69px;width:4.20px;height:4.20px;background:#ececec;'></div>
<div class='a' style='left:84.00px;top:658.99px;width:14.50px;height:16.80px;box-sizing:border-box;border:2.3px solid #ececec;'></div>
<div class='a' style='left:86.00px;top:663.69px;width:10.50px;height:1.80px;background:#ececec;'></div>
<div class='a t' style='left:301.40px;top:660.39px;font-family:"Liberation Mono", monospace;font-size:15.67px;line-height:15.67px;font-weight:700;color:#c8c8c8;transform:scaleY(1.08);transform-origin:0 12.00px;-webkit-text-stroke:0.3px #c8c8c8;'>:</div>
<div class='a t' style='left:256.90px;top:660.39px;font-family:"Liberation Mono", monospace;font-size:15.67px;line-height:15.67px;font-weight:700;color:#ffffff;transform:scaleY(1.08);transform-origin:0 12.00px;-webkit-text-stroke:0.3px #ffffff;'>lead</div>
<div class='a t' style='left:315.60px;top:660.39px;font-family:"Liberation Mono", monospace;font-size:15.67px;line-height:15.67px;font-weight:700;color:#ff9a48;transform:scaleY(1.08);transform-origin:0 12.00px;-webkit-text-stroke:0.3px #ff9a48;'>false</div>
<div class='a' style='left:56.70px;top:687.22px;width:4.20px;height:4.20px;background:#ececec;'></div>
<div class='a' style='left:56.70px;top:694.62px;width:4.20px;height:4.20px;background:#ececec;'></div>
<div class='a' style='left:56.70px;top:702.02px;width:4.20px;height:4.20px;background:#ececec;'></div>
<div class='a' style='left:62.70px;top:687.22px;width:4.20px;height:4.20px;background:#ececec;'></div>
<div class='a' style='left:62.70px;top:694.62px;width:4.20px;height:4.20px;background:#ececec;'></div>
<div class='a' style='left:62.70px;top:702.02px;width:4.20px;height:4.20px;background:#ececec;'></div>
<div class='a' style='left:84.00px;top:688.32px;width:14.50px;height:16.80px;box-sizing:border-box;border:2.3px solid #ececec;'></div>
<div class='a' style='left:86.00px;top:693.02px;width:10.50px;height:1.80px;background:#ececec;'></div>
<div class='a t' style='left:337.41px;top:689.72px;font-family:"Liberation Mono", monospace;font-size:15.67px;line-height:15.67px;font-weight:700;color:#c8c8c8;transform:scaleY(1.08);transform-origin:0 12.00px;-webkit-text-stroke:0.3px #c8c8c8;'>:</div>
<div class='a t' style='left:256.90px;top:689.72px;font-family:"Liberation Mono", monospace;font-size:15.67px;line-height:15.67px;font-weight:700;color:#ffffff;transform:scaleY(1.08);transform-origin:0 12.00px;-webkit-text-stroke:0.3px #ffffff;'>numsteps</div>
<div class='a t' style='left:351.62px;top:689.72px;font-family:"Liberation Mono", monospace;font-size:15.67px;line-height:15.67px;font-weight:700;color:#70e891;transform:scaleY(1.08);transform-origin:0 12.00px;-webkit-text-stroke:0.3px #70e891;'>101</div>
<div class='a' style='left:56.70px;top:716.55px;width:4.20px;height:4.20px;background:#ececec;'></div>
<div class='a' style='left:56.70px;top:723.95px;width:4.20px;height:4.20px;background:#ececec;'></div>
<div class='a' style='left:56.70px;top:731.35px;width:4.20px;height:4.20px;background:#ececec;'></div>
<div class='a' style='left:62.70px;top:716.55px;width:4.20px;height:4.20px;background:#ececec;'></div>
<div class='a' style='left:62.70px;top:723.95px;width:4.20px;height:4.20px;background:#ececec;'></div>
<div class='a' style='left:62.70px;top:731.35px;width:4.20px;height:4.20px;background:#ececec;'></div>
<div class='a' style='left:84.00px;top:717.65px;width:14.50px;height:16.80px;box-sizing:border-box;border:2.3px solid #ececec;'></div>
<div class='a' style='left:86.00px;top:722.35px;width:10.50px;height:1.80px;background:#ececec;'></div>
<div class='a t' style='left:337.41px;top:719.05px;font-family:"Liberation Mono", monospace;font-size:15.67px;line-height:15.67px;font-weight:700;color:#c8c8c8;transform:scaleY(1.08);transform-origin:0 12.00px;-webkit-text-stroke:0.3px #c8c8c8;'>:</div>
<div class='a t' style='left:256.90px;top:719.05px;font-family:"Liberation Mono", monospace;font-size:15.67px;line-height:15.67px;font-weight:700;color:#ffffff;transform:scaleY(1.08);transform-origin:0 12.00px;-webkit-text-stroke:0.3px #ffffff;'>stepping</div>
<div class='a t' style='left:351.62px;top:719.05px;font-family:"Liberation Mono", monospace;font-size:15.67px;line-height:15.67px;font-weight:700;color:#70e891;transform:scaleY(1.08);transform-origin:0 12.00px;-webkit-text-stroke:0.3px #70e891;'>linear</div>
<div class='a' style='left:56.70px;top:745.88px;width:4.20px;height:4.20px;background:#ececec;'></div>
<div class='a' style='left:56.70px;top:753.28px;width:4.20px;height:4.20px;background:#ececec;'></div>
<div class='a' style='left:56.70px;top:760.68px;width:4.20px;height:4.20px;background:#ececec;'></div>
<div class='a' style='left:62.70px;top:745.88px;width:4.20px;height:4.20px;background:#ececec;'></div>
<div class='a' style='left:62.70px;top:753.28px;width:4.20px;height:4.20px;background:#ececec;'></div>
<div class='a' style='left:62.70px;top:760.68px;width:4.20px;height:4.20px;background:#ececec;'></div>
<div class='a' style='left:84.00px;top:746.98px;width:14.50px;height:16.80px;box-sizing:border-box;border:2.3px solid #ececec;'></div>
<div class='a' style='left:86.00px;top:751.68px;width:10.50px;height:1.80px;background:#ececec;'></div>
<div class='a t' style='left:356.22px;top:748.38px;font-family:"Liberation Mono", monospace;font-size:15.67px;line-height:15.67px;font-weight:700;color:#c8c8c8;transform:scaleY(1.08);transform-origin:0 12.00px;-webkit-text-stroke:0.3px #c8c8c8;'>:</div>
<div class='a t' style='left:256.90px;top:748.38px;font-family:"Liberation Mono", monospace;font-size:15.67px;line-height:15.67px;font-weight:700;color:#ffffff;transform:scaleY(1.08);transform-origin:0 12.00px;-webkit-text-stroke:0.3px #ffffff;'>targetPath</div>
<div class='a t' style='left:370.42px;top:748.38px;font-family:"Liberation Mono", monospace;font-size:15.67px;line-height:15.67px;font-weight:700;color:#70e891;transform:scaleY(1.08);transform-origin:0 12.00px;-webkit-text-stroke:0.3px #70e891;'>/recipes/0/materials/0/ReactExtent</div>
<div class='a' style='left:56.70px;top:775.21px;width:4.20px;height:4.20px;background:#ececec;'></div>
<div class='a' style='left:56.70px;top:782.61px;width:4.20px;height:4.20px;background:#ececec;'></div>
<div class='a' style='left:56.70px;top:790.01px;width:4.20px;height:4.20px;background:#ececec;'></div>
<div class='a' style='left:62.70px;top:775.21px;width:4.20px;height:4.20px;background:#ececec;'></div>
<div class='a' style='left:62.70px;top:782.61px;width:4.20px;height:4.20px;background:#ececec;'></div>
<div class='a' style='left:62.70px;top:790.01px;width:4.20px;height:4.20px;background:#ececec;'></div>
<div class='a' style='left:84.00px;top:776.31px;width:14.50px;height:16.80px;box-sizing:border-box;border:2.3px solid #ececec;'></div>
<div class='a' style='left:86.00px;top:781.01px;width:10.50px;height:1.80px;background:#ececec;'></div>
<div class='a t' style='left:356.22px;top:777.71px;font-family:"Liberation Mono", monospace;font-size:15.67px;line-height:15.67px;font-weight:700;color:#c8c8c8;transform:scaleY(1.08);transform-origin:0 12.00px;-webkit-text-stroke:0.3px #c8c8c8;'>:</div>
<div class='a t' style='left:256.90px;top:777.71px;font-family:"Liberation Mono", monospace;font-size:15.67px;line-height:15.67px;font-weight:700;color:#ffffff;transform:scaleY(1.08);transform-origin:0 12.00px;-webkit-text-stroke:0.3px #ffffff;'>targetUnit</div>
<div class='a t' style='left:370.42px;top:777.71px;font-family:"Liberation Mono", monospace;font-size:15.67px;line-height:15.67px;font-weight:700;color:#70e891;transform:scaleY(1.08);transform-origin:0 12.00px;-webkit-text-stroke:0.3px #70e891;'>1</div>
<div class='a' style='left:56.70px;top:804.54px;width:4.20px;height:4.20px;background:#ececec;'></div>
<div class='a' style='left:56.70px;top:811.94px;width:4.20px;height:4.20px;background:#ececec;'></div>
<div class='a' style='left:56.70px;top:819.34px;width:4.20px;height:4.20px;background:#ececec;'></div>
<div class='a' style='left:62.70px;top:804.54px;width:4.20px;height:4.20px;background:#ececec;'></div>
<div class='a' style='left:62.70px;top:811.94px;width:4.20px;height:4.20px;background:#ececec;'></div>
<div class='a' style='left:62.70px;top:819.34px;width:4.20px;height:4.20px;background:#ececec;'></div>
<div class='a' style='left:84.00px;top:805.64px;width:14.50px;height:16.80px;box-sizing:border-box;border:2.3px solid #ececec;'></div>
<div class='a' style='left:86.00px;top:810.34px;width:10.50px;height:1.80px;background:#ececec;'></div>
<div class='a t' style='left:337.41px;top:807.04px;font-family:"Liberation Mono", monospace;font-size:15.67px;line-height:15.67px;font-weight:700;color:#c8c8c8;transform:scaleY(1.08);transform-origin:0 12.00px;-webkit-text-stroke:0.3px #c8c8c8;'>:</div>
<div class='a t' style='left:256.90px;top:807.04px;font-family:"Liberation Mono", monospace;font-size:15.67px;line-height:15.67px;font-weight:700;color:#ffffff;transform:scaleY(1.08);transform-origin:0 12.00px;-webkit-text-stroke:0.3px #ffffff;'>valstart</div>
<div class='a t' style='left:351.62px;top:807.04px;font-family:"Liberation Mono", monospace;font-size:15.67px;line-height:15.67px;font-weight:700;color:#70e891;transform:scaleY(1.08);transform-origin:0 12.00px;-webkit-text-stroke:0.3px #70e891;'>0.835</div>
<div class='a' style='left:56.70px;top:833.87px;width:4.20px;height:4.20px;background:#ececec;'></div>
<div class='a' style='left:56.70px;top:841.27px;width:4.20px;height:4.20px;background:#ececec;'></div>
<div class='a' style='left:56.70px;top:848.67px;width:4.20px;height:4.20px;background:#ececec;'></div>
<div class='a' style='left:62.70px;top:833.87px;width:4.20px;height:4.20px;background:#ececec;'></div>
<div class='a' style='left:62.70px;top:841.27px;width:4.20px;height:4.20px;background:#ececec;'></div>
<div class='a' style='left:62.70px;top:848.67px;width:4.20px;height:4.20px;background:#ececec;'></div>
<div class='a' style='left:84.00px;top:834.97px;width:14.50px;height:16.80px;box-sizing:border-box;border:2.3px solid #ececec;'></div>
<div class='a' style='left:86.00px;top:839.67px;width:10.50px;height:1.80px;background:#ececec;'></div>
<div class='a t' style='left:328.01px;top:836.37px;font-family:"Liberation Mono", monospace;font-size:15.67px;line-height:15.67px;font-weight:700;color:#c8c8c8;transform:scaleY(1.08);transform-origin:0 12.00px;-webkit-text-stroke:0.3px #c8c8c8;'>:</div>
<div class='a t' style='left:256.90px;top:836.37px;font-family:"Liberation Mono", monospace;font-size:15.67px;line-height:15.67px;font-weight:700;color:#ffffff;transform:scaleY(1.08);transform-origin:0 12.00px;-webkit-text-stroke:0.3px #ffffff;'>valstep</div>
<div class='a t' style='left:342.21px;top:836.37px;font-family:"Liberation Mono", monospace;font-size:15.67px;line-height:15.67px;font-weight:700;color:#70e891;transform:scaleY(1.08);transform-origin:0 12.00px;-webkit-text-stroke:0.3px #70e891;'>0</div>
<div class='a' style='left:56.70px;top:863.20px;width:4.20px;height:4.20px;background:#ececec;'></div>
<div class='a' style='left:56.70px;top:870.60px;width:4.20px;height:4.20px;background:#ececec;'></div>
<div class='a' style='left:56.70px;top:878.00px;width:4.20px;height:4.20px;background:#ececec;'></div>
<div class='a' style='left:62.70px;top:863.20px;width:4.20px;height:4.20px;background:#ececec;'></div>
<div class='a' style='left:62.70px;top:870.60px;width:4.20px;height:4.20px;background:#ececec;'></div>
<div class='a' style='left:62.70px;top:878.00px;width:4.20px;height:4.20px;background:#ececec;'></div>
<div class='a' style='left:84.00px;top:864.30px;width:14.50px;height:16.80px;box-sizing:border-box;border:2.3px solid #ececec;'></div>
<div class='a' style='left:86.00px;top:869.00px;width:10.50px;height:1.80px;background:#ececec;'></div>
<div class='a t' style='left:328.01px;top:865.70px;font-family:"Liberation Mono", monospace;font-size:15.67px;line-height:15.67px;font-weight:700;color:#c8c8c8;transform:scaleY(1.08);transform-origin:0 12.00px;-webkit-text-stroke:0.3px #c8c8c8;'>:</div>
<div class='a t' style='left:256.90px;top:865.70px;font-family:"Liberation Mono", monospace;font-size:15.67px;line-height:15.67px;font-weight:700;color:#ffffff;transform:scaleY(1.08);transform-origin:0 12.00px;-webkit-text-stroke:0.3px #ffffff;'>valstop</div>
<div class='a t' style='left:342.21px;top:865.70px;font-family:"Liberation Mono", monospace;font-size:15.67px;line-height:15.67px;font-weight:700;color:#70e891;transform:scaleY(1.08);transform-origin:0 12.00px;-webkit-text-stroke:0.3px #70e891;'>0.835</div>
<div class='a' style='left:56.70px;top:892.53px;width:4.20px;height:4.20px;background:#ececec;'></div>
<div class='a' style='left:56.70px;top:899.93px;width:4.20px;height:4.20px;background:#ececec;'></div>
<div class='a' style='left:56.70px;top:907.33px;width:4.20px;height:4.20px;background:#ececec;'></div>
<div class='a' style='left:62.70px;top:892.53px;width:4.20px;height:4.20px;background:#ececec;'></div>
<div class='a' style='left:62.70px;top:899.93px;width:4.20px;height:4.20px;background:#ececec;'></div>
<div class='a' style='left:62.70px;top:907.33px;width:4.20px;height:4.20px;background:#ececec;'></div>
<div class='a' style='left:84.00px;top:893.63px;width:14.50px;height:16.80px;box-sizing:border-box;border:2.3px solid #ececec;'></div>
<div class='a' style='left:86.00px;top:898.33px;width:10.50px;height:1.80px;background:#ececec;'></div>
<div class='a t' style='left:410.44px;top:895.03px;font-family:"Liberation Mono", monospace;font-size:15.67px;line-height:15.67px;font-weight:700;color:#c8c8c8;transform:scaleY(1.08);transform-origin:0 12.00px;-webkit-text-stroke:0.3px #c8c8c8;'>:</div>
<div class='a t' style='left:198.30px;top:895.03px;font-family:"Liberation Mono", monospace;font-size:15.67px;line-height:15.67px;font-weight:700;color:#ffffff;transform:scaleY(1.08);transform-origin:0 12.00px;-webkit-text-stroke:0.3px #ffffff;'>inputSpans__isExpanded</div>
<div class='a t' style='left:424.64px;top:895.03px;font-family:"Liberation Mono", monospace;font-size:15.67px;line-height:15.67px;font-weight:700;color:#ff9a48;transform:scaleY(1.08);transform-origin:0 12.00px;-webkit-text-stroke:0.3px #ff9a48;'>true</div>
<div class='a' style='left:56.70px;top:921.86px;width:4.20px;height:4.20px;background:#ececec;'></div>
<div class='a' style='left:56.70px;top:929.26px;width:4.20px;height:4.20px;background:#ececec;'></div>
<div class='a' style='left:56.70px;top:936.66px;width:4.20px;height:4.20px;background:#ececec;'></div>
<div class='a' style='left:62.70px;top:921.86px;width:4.20px;height:4.20px;background:#ececec;'></div>
<div class='a' style='left:62.70px;top:929.26px;width:4.20px;height:4.20px;background:#ececec;'></div>
<div class='a' style='left:62.70px;top:936.66px;width:4.20px;height:4.20px;background:#ececec;'></div>
<div class='a' style='left:84.00px;top:922.96px;width:14.50px;height:16.80px;box-sizing:border-box;border:2.3px solid #ececec;'></div>
<div class='a' style='left:86.00px;top:927.66px;width:10.50px;height:1.80px;background:#ececec;'></div>
<div class='a t' style='left:316.42px;top:924.36px;font-family:"Liberation Mono", monospace;font-size:15.67px;line-height:15.67px;font-weight:700;color:#c8c8c8;transform:scaleY(1.08);transform-origin:0 12.00px;-webkit-text-stroke:0.3px #c8c8c8;'>:</div>
<div class='a t' style='left:198.30px;top:924.36px;font-family:"Liberation Mono", monospace;font-size:15.67px;line-height:15.67px;font-weight:700;color:#ffffff;transform:scaleY(1.08);transform-origin:0 12.00px;-webkit-text-stroke:0.3px #ffffff;'>numtimesteps</div>
<div class='a t' style='left:330.62px;top:924.36px;font-family:"Liberation Mono", monospace;font-size:15.67px;line-height:15.67px;font-weight:700;color:#70e891;transform:scaleY(1.08);transform-origin:0 12.00px;-webkit-text-stroke:0.3px #70e891;'>0</div>
<div class='a' style='left:56.70px;top:951.19px;width:4.20px;height:4.20px;background:#ececec;'></div>
<div class='a' style='left:56.70px;top:958.59px;width:4.20px;height:4.20px;background:#ececec;'></div>
<div class='a' style='left:56.70px;top:965.99px;width:4.20px;height:4.20px;background:#ececec;'></div>
<div class='a' style='left:62.70px;top:951.19px;width:4.20px;height:4.20px;background:#ececec;'></div>
<div class='a' style='left:62.70px;top:958.59px;width:4.20px;height:4.20px;background:#ececec;'></div>
<div class='a' style='left:62.70px;top:965.99px;width:4.20px;height:4.20px;background:#ececec;'></div>
<div class='a' style='left:84.00px;top:952.29px;width:14.50px;height:16.80px;box-sizing:border-box;border:2.3px solid #ececec;'></div>
<div class='a' style='left:86.00px;top:956.99px;width:10.50px;height:1.80px;background:#ececec;'></div>
<div class='a t' style='left:316.42px;top:953.69px;font-family:"Liberation Mono", monospace;font-size:15.67px;line-height:15.67px;font-weight:700;color:#c8c8c8;transform:scaleY(1.08);transform-origin:0 12.00px;-webkit-text-stroke:0.3px #c8c8c8;'>:</div>
<div class='a t' style='left:198.30px;top:953.69px;font-family:"Liberation Mono", monospace;font-size:15.67px;line-height:15.67px;font-weight:700;color:#ffffff;transform:scaleY(1.08);transform-origin:0 12.00px;-webkit-text-stroke:0.3px #ffffff;'>parentTaskId</div>
<div class='a t' style='left:330.62px;top:953.69px;font-family:"Liberation Mono", monospace;font-size:15.67px;line-height:15.67px;font-weight:700;color:#70e891;transform:scaleY(1.08);transform-origin:0 12.00px;-webkit-text-stroke:0.3px #70e891;'>dkulik_recipes/CEM-I-SR::xrf::PCSrx</div>
<div class='a' style='left:56.70px;top:980.52px;width:4.20px;height:4.20px;background:#ececec;'></div>
<div class='a' style='left:56.70px;top:987.92px;width:4.20px;height:4.20px;background:#ececec;'></div>
<div class='a' style='left:56.70px;top:995.32px;width:4.20px;height:4.20px;background:#ececec;'></div>
<div class='a' style='left:62.70px;top:980.52px;width:4.20px;height:4.20px;background:#ececec;'></div>
<div class='a' style='left:62.70px;top:987.92px;width:4.20px;height:4.20px;background:#ececec;'></div>
<div class='a' style='left:62.70px;top:995.32px;width:4.20px;height:4.20px;background:#ececec;'></div>
<div class='a' style='left:84.00px;top:981.62px;width:14.50px;height:16.80px;box-sizing:border-box;border:2.3px solid #ececec;'></div>
<div class='a' style='left:86.00px;top:986.32px;width:10.50px;height:1.80px;background:#ececec;'></div>
<div class='a t' style='left:419.84px;top:983.02px;font-family:"Liberation Mono", monospace;font-size:15.67px;line-height:15.67px;font-weight:700;color:#c8c8c8;transform:scaleY(1.08);transform-origin:0 12.00px;-webkit-text-stroke:0.3px #c8c8c8;'>:</div>
<div class='a t' style='left:198.30px;top:983.02px;font-family:"Liberation Mono", monospace;font-size:15.67px;line-height:15.67px;font-weight:700;color:#ffffff;transform:scaleY(1.08);transform-origin:0 12.00px;-webkit-text-stroke:0.3px #ffffff;'>processData__isExpanded</div>
<div class='a t' style='left:434.05px;top:983.02px;font-family:"Liberation Mono", monospace;font-size:15.67px;line-height:15.67px;font-weight:700;color:#ff9a48;transform:scaleY(1.08);transform-origin:0 12.00px;-webkit-text-stroke:0.3px #ff9a48;'>true</div>
<div class='a' style='left:56.70px;top:1009.85px;width:4.20px;height:4.20px;background:#ececec;'></div>
<div class='a' style='left:56.70px;top:1017.25px;width:4.20px;height:4.20px;background:#ececec;'></div>
<div class='a' style='left:56.70px;top:1024.65px;width:4.20px;height:4.20px;background:#ececec;'></div>
<div class='a' style='left:62.70px;top:1009.85px;width:4.20px;height:4.20px;background:#ececec;'></div>
<div class='a' style='left:62.70px;top:1017.25px;width:4.20px;height:4.20px;background:#ececec;'></div>
<div class='a' style='left:62.70px;top:1024.65px;width:4.20px;height:4.20px;background:#ececec;'></div>
<div class='a' style='left:84.00px;top:1010.95px;width:14.50px;height:16.80px;box-sizing:border-box;border:2.3px solid #ececec;'></div>
<div class='a' style='left:86.00px;top:1015.65px;width:10.50px;height:1.80px;background:#ececec;'></div>
<div class='a t' style='left:307.02px;top:1012.35px;font-family:"Liberation Mono", monospace;font-size:15.67px;line-height:15.67px;font-weight:700;color:#c8c8c8;transform:scaleY(1.08);transform-origin:0 12.00px;-webkit-text-stroke:0.3px #c8c8c8;'>:</div>
<div class='a t' style='left:198.30px;top:1012.35px;font-family:"Liberation Mono", monospace;font-size:15.67px;line-height:15.67px;font-weight:700;color:#ffffff;transform:scaleY(1.08);transform-origin:0 12.00px;-webkit-text-stroke:0.3px #ffffff;'>processType</div>
<div class='a t' style='left:321.22px;top:1012.35px;font-family:"Liberation Mono", monospace;font-size:15.67px;line-height:15.67px;font-weight:700;color:#70e891;transform:scaleY(1.08);transform-origin:0 12.00px;-webkit-text-stroke:0.3px #70e891;'>ingress</div>
<div class='a' style='left:77.70px;top:545.40px;width:159.20px;height:173.90px;background:#fff;box-sizing:border-box;border:1px solid #d4d4d4;box-shadow:3px 3px 12px rgba(140,140,140,0.3);'></div>
<svg style='left:83.9px;top:551.60px' width='19.5' height='19.5' viewBox='0 0 19.5 19.5'><rect width='19.5' height='19.5' fill='#454545'/><path d='M7.2 2.6 H5.9 C4.6 2.6 4.1 3.4 4.1 4.6 V8 C4.1 9.1 3.4 9.75 2 9.75 C3.4 9.75 4.1 10.4 4.1 11.5 V14.9 C4.1 16.1 4.6 16.9 5.9 16.9 H7.2' fill='none' stroke='#fff' stroke-width='2.7'/><path d='M12.3 2.6 H13.6 C14.9 2.6 15.4 3.4 15.4 4.6 V8 C15.4 9.1 16.1 9.75 17.5 9.75 C16.1 9.75 15.4 10.4 15.4 11.5 V14.9 C15.4 16.1 14.9 16.9 13.6 16.9 H12.3' fill='none' stroke='#fff' stroke-width='2.7'/></svg>
<svg style='left:83.9px;top:583.30px' width='19.5' height='19.5' viewBox='0 0 19.5 19.5'><rect width='19.5' height='19.5' fill='#454545'/><path d='M1.8 6.1 L7.6 1.5 V4.4 H16 V16.9 H12.8 V7.7 H7.6 V10.7 Z' fill='#fff'/></svg>
<svg style='left:83.9px;top:627.90px' width='19.5' height='19.5' viewBox='0 0 19.5 19.5'><rect width='19.5' height='19.5' fill='#454545'/><path d='M8.4 3.5 H11.1 V8.4 H16 V11.1 H11.1 V16 H8.4 V11.1 H3.5 V8.4 H8.4 Z' fill='#fff'/></svg>
<svg style='left:83.9px;top:660.20px' width='19.5' height='19.5' viewBox='0 0 19.5 19.5'><rect width='19.5' height='19.5' fill='#454545'/><path d='M3.2 3.2 H12 V6 H6 V12 H3.2 Z' fill='#fff'/><rect x='7' y='7' width='9.3' height='9.3' fill='#fff'/></svg>
<svg style='left:83.9px;top:691.30px' width='19.5' height='19.5' viewBox='0 0 19.5 19.5'><rect width='19.5' height='19.5' fill='#e45434'/><path d='M5 5 L14.5 14.5 M14.5 5 L5 14.5' stroke='#fff' stroke-width='2.4'/></svg>
<div class='a t' style='left:108.00px;top:554.21px;font-family:"Liberation Sans", sans-serif;font-size:17px;line-height:17px;font-weight:400;color:#333;'>Type</div>
<div class='a t' style='left:108.50px;top:586.01px;font-family:"Liberation Sans", sans-serif;font-size:17px;line-height:17px;font-weight:400;color:#333;'>Extract</div>
<div class='a t' style='left:108.50px;top:630.51px;font-family:"Liberation Sans", sans-serif;font-size:17px;line-height:17px;font-weight:400;color:#333;'>Insert</div>
<div class='a t' style='left:108.50px;top:662.21px;font-family:"Liberation Sans", sans-serif;font-size:17px;line-height:17px;font-weight:400;color:#333;'>Duplicate</div>
<div class='a t' style='left:108.50px;top:694.11px;font-family:"Liberation Sans", sans-serif;font-size:17px;line-height:17px;font-weight:400;color:#333;'>Remove</div>
<div class='a' style='left:79.00px;top:616.00px;width:156.50px;height:1.20px;background:#dcdcdc;'></div>
<div class='a' style='left:196.20px;top:622.80px;width:1.10px;height:32.20px;background:#dcdcdc;'></div>
<svg style='left:210.3px;top:557px' width='11' height='10' viewBox='0 0 11 10'><path d='M0 0 H10.7 L5.35 9.4 Z' fill='#555'/></svg>
<svg style='left:210.3px;top:633.8px' width='11' height='10' viewBox='0 0 11 10'><path d='M0 0 H10.7 L5.35 9.4 Z' fill='#555'/></svg>
<svg style='left:0;top:0' width='1000' height='1037'>
<path d='M989.5 1033.5 L996.5 1026.5 M993 1033.5 L996.5 1030' stroke='#222' stroke-width='0.9'/>
</svg>
<div class='a' style='left:117.00px;top:1035.00px;width:328.00px;height:2.00px;background:#f9e1ee;'></div>
<div class='a' style='left:445.00px;top:1035.00px;width:262.00px;height:2.00px;background:#e8f5e4;'></div>
<div class='a' style='left:707.00px;top:1035.00px;width:43.00px;height:2.00px;background:#f9e1ee;'></div>
<div class='a' style='left:750.00px;top:1035.00px;width:167.00px;height:2.00px;background:#dbe8f4;'></div>
<div class='a' style='left:941.00px;top:1035.00px;width:17.00px;height:2.00px;background:#f5b48a;'></div>
<div class='a' style='left:116.00px;top:1034.00px;width:1.00px;height:3.00px;background:#444;'></div>
</body></html>
